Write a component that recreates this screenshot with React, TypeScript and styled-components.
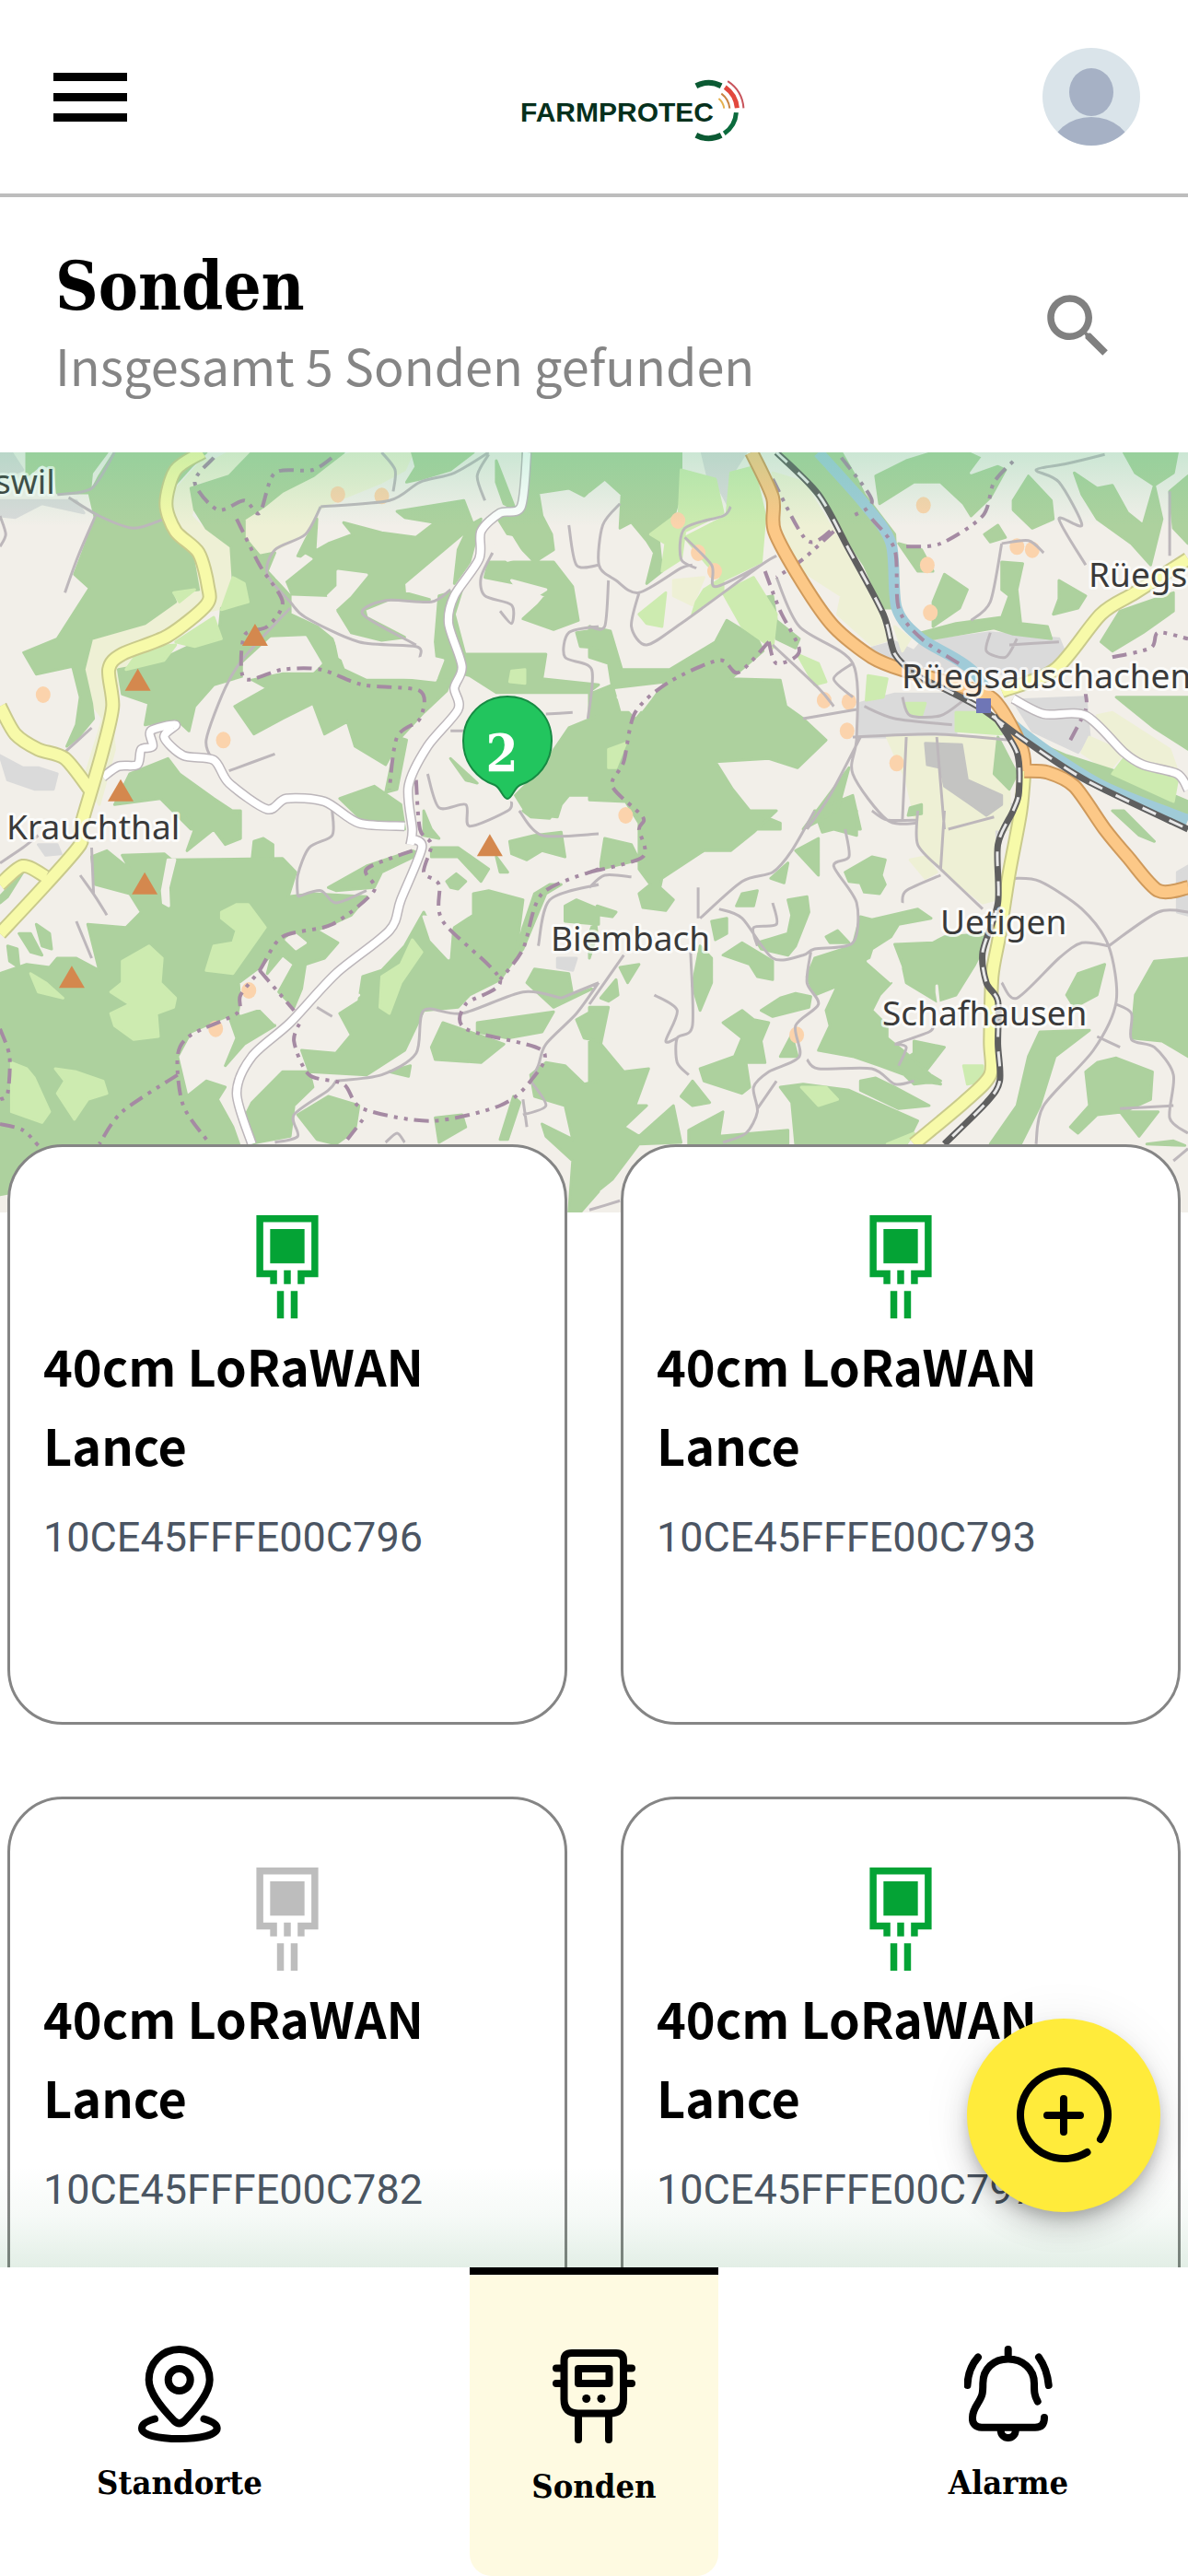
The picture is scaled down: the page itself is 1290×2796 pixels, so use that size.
import React from "react";
import styled, { createGlobalStyle } from "styled-components";

const slab = `"Roboto Slab", "DejaVu Serif Condensed", "DejaVu Serif", serif`;
const sans = `"Noto Sans CJK SC", "Noto Sans", sans-serif`;

const GlobalStyle = createGlobalStyle`
  *, *::before, *::after { box-sizing: border-box; }
  body { margin: 0; background: #fff; color: #000; font-family: ${sans}; }
  h1, h2, p, ul { margin: 0; padding: 0; }
  ul { list-style: none; }
  button { border: 0; padding: 0; background: none; font: inherit; color: inherit; cursor: pointer; }
`;

const Shell = styled.div`
  height: 100vh;
  display: flex;
  flex-direction: column;
  overflow: hidden;
`;

const Header = styled.header`
  flex: none;
  display: grid;
  grid-template-columns: 1fr auto 1fr;
  align-items: center;
  height: 214px;
  padding: 0 52px 0 58px;
  border-bottom: 4px solid #bdbdbd;
`;

const MenuButton = styled.button`
  justify-self: start;
  width: 80px;
  display: grid;
  gap: 13px;
`;

const MenuBar = styled.span`
  height: 9px;
  background: #000;
`;

const AvatarButton = styled.button`
  justify-self: end;
  width: 106px;
  height: 106px;
  border-radius: 50%;
  overflow: hidden;
`;

const Content = styled.div`
  position: relative;
  flex: 1;
  min-height: 0;
  display: flex;
  flex-direction: column;
`;

const Scroller = styled.main`
  flex: 1;
  min-height: 0;
  overflow-y: auto;
  scrollbar-width: none;
`;

const TitleRow = styled.div`
  display: flex;
  align-items: center;
  justify-content: space-between;
  padding: 55px 74px 52px 60px;
`;

const Title = styled.h1`
  font: 700 72px/84px ${slab};
`;

const Subtitle = styled.p`
  font-size: 54px;
  line-height: 86px;
  color: #858585;
`;

const IconButton = styled.button`
  width: 90px;
  height: 90px;
  color: #808080;
`;

const MapArea = styled.section`
  position: relative;
  height: 825px;
  overflow: hidden;
  background: #f2efe9;
  &::after {
    content: "";
    position: absolute;
    inset: 0 0 auto;
    height: 80px;
    background: linear-gradient(rgba(90, 205, 150, 0.26), rgba(90, 205, 150, 0));
    pointer-events: none;
  }
`;

const Marker = styled.button`
  position: absolute;
  left: calc(50% - 145px);
  top: 263px;
  width: 102px;
  height: 116px;
`;

const Fill = styled.svg`
  display: block;
  width: 100%;
  height: 100%;
`;

const CardGrid = styled.ul`
  position: relative;
  display: grid;
  grid-template-columns: 1fr 1fr;
  gap: 78px 58px;
  margin-top: -74px;
  padding: 0 8px 60px;
`;

const Card = styled.li`
  min-height: 630px;
  padding: 74px 36px 36px;
  border: 3px solid #858585;
  border-radius: 60px;
  background: #fff;
`;

const ProbeIcon = styled.svg<{ $online: boolean }>`
  display: block;
  width: 68px;
  height: 112px;
  margin: 0 auto 8px;
  color: ${(p) => (p.$online ? "#04a335" : "#bdbdbd")};
`;

const CardTitle = styled.h2`
  font-size: 54px;
  line-height: 86px;
  font-weight: 600;
`;

const CardId = styled.p`
  margin-top: 22px;
  font: 400 45px/72px Roboto, sans-serif;
  color: #4b5563;
`;

const BottomGlow = styled.div`
  position: absolute;
  inset: auto 0 0;
  height: 110px;
  background: linear-gradient(rgba(20, 120, 50, 0), rgba(20, 120, 50, 0.04) 50%, rgba(20, 120, 50, 0.12));
  pointer-events: none;
`;

const AddButton = styled.button`
  position: absolute;
  right: 30px;
  bottom: 60px;
  width: 210px;
  height: 210px;
  border-radius: 50%;
  background: #ffeb3b;
  display: grid;
  place-items: center;
  box-shadow: 0 9px 15px -3px rgba(0, 0, 0, 0.2), 0 18px 30px rgba(0, 0, 0, 0.14), 0 3px 54px rgba(0, 0, 0, 0.08);
`;

const TabBar = styled.nav`
  flex: none;
  display: flex;
  justify-content: space-between;
  height: 335px;
  padding: 0 60px;
  background: #fff;
`;

const Tab = styled.a<{ $active?: boolean }>`
  width: 270px;
  display: flex;
  flex-direction: column;
  align-items: center;
  justify-content: center;
  gap: 18px;
  border-top: ${(p) => (p.$active ? "8px solid #000" : "0")};
  border-radius: 0 0 24px 24px;
  background: ${(p) => (p.$active ? "#fefae1" : "transparent")};
  color: #000;
  text-decoration: none;
  font: 700 36px/48px ${slab};
`;

const LineIcon = styled.svg`
  display: block;
  fill: none;
  stroke: #000;
  stroke-width: 8px;
  stroke-linecap: round;
  stroke-linejoin: round;
`;

/* ---------- Map ---------- */

type Tile = { x: number; y: number };
type Layer = { tile: Tile; shapes: string[] };

const NW: Tile = { x: 0, y: -11 };
const NE: Tile = { x: 640, y: -11 };
const SW: Tile = { x: 0, y: 389 };
const SE: Tile = { x: 640, y: 389 };
const UNIT_X = 650 / 1568;
const UNIT_Y = 1 / 3;

const project = (tile: Tile, shape: string) =>
  shape.split(" ").map((pair) => {
    const [x, y] = pair.split(",").map(Number);
    return [tile.x + x * UNIT_X, tile.y + y * UNIT_Y];
  });

const areaPath = (layers: Layer[]) =>
  layers
    .flatMap(({ tile, shapes }) =>
      shapes.map((s) => "M" + project(tile, s).map(([x, y]) => `${x.toFixed(1)} ${y.toFixed(1)}`).join("L") + "Z")
    )
    .join("");

/* Lines run through their points as Catmull-Rom curves. */
const linePath = (layers: Layer[]) =>
  layers
    .flatMap(({ tile, shapes }) =>
      shapes.map((s) => {
        const p = project(tile, s);
        let d = `M${p[0][0].toFixed(1)} ${p[0][1].toFixed(1)}`;
        for (let i = 0; i < p.length - 1; i++) {
          const a = p[i - 1] || p[i];
          const b = p[i];
          const c = p[i + 1];
          const e = p[i + 2] || c;
          d += `C${(b[0] + (c[0] - a[0]) / 7).toFixed(1)} ${(b[1] + (c[1] - a[1]) / 7).toFixed(1)} ${(c[0] - (e[0] - b[0]) / 7).toFixed(1)} ${(c[1] - (e[1] - b[1]) / 7).toFixed(1)} ${c[0].toFixed(1)} ${c[1].toFixed(1)}`;
        }
        return d;
      })
    )
    .join("");

const forest: Layer[] = [
  {
    tile: NW,
    shapes: [
      "70,33 280,33 240,100 235,165 150,165 145,90 110,70 70,110",
      "300,33 540,33 500,80 450,150 440,240 500,340 520,480 450,490 460,520 380,590 240,640 220,740 240,850 245,900 205,960 175,990 200,920 210,830 190,730 95,755 62,685 150,640 235,475 195,430 250,250 235,170 260,110",
      "660,33 900,33 820,110 740,160 690,210 640,250 640,310 680,370 720,360 700,420 730,460 760,500 760,560 830,600 870,640 900,740 960,775 1180,775 1170,810 1110,880 1050,960 1010,1050 930,990 910,910 850,950 820,850 740,900 665,950 615,860 700,800 640,760 560,790 510,860 495,940 460,900 380,920 390,850 320,820 310,740 400,720 520,650 575,600 580,540 650,500 610,440 605,340 540,280 510,220 500,150 600,110",
      "765,495 880,500 885,550 920,620 1000,645 1060,635 960,570 955,545 1020,512 1125,512 1060,490 1058,460 1240,270 1215,190 1040,225 1060,245 1140,262 1090,310 1000,295 900,262 925,300 860,330 825,355 830,250 800,320 780,370 820,380 750,450",
      "1080,33 1240,33 1180,90 1100,120 1065,130 1090,80",
      "1370,33 1568,33 1568,130 1530,175 1490,150 1410,165 1420,240 1445,300 1450,350 1400,390 1330,300 1300,240 1370,220",
      "1280,390 1450,390 1500,470 1515,580 1450,610 1370,575 1410,530 1430,500 1350,460 1270,440",
      "1200,690 1430,690 1420,770 1568,790 1540,815 1300,815 1230,760 1200,750",
      "1150,500 1210,480 1190,560 1220,700 1200,800 1150,770 1140,650",
      "1490,930 1568,890 1568,1150 1490,1150 1470,1180 1460,1220 1380,1210 1350,1150 1390,1100 1430,1040",
      "1510,620 1568,610 1568,670 1520,665",
      "340,1080 440,1030 470,1080 560,1160 620,1210 630,1260 500,1260 420,1160 300,1180",
      "1065,970 1040,1130 1010,1140 1040,960",
      "890,1160 980,1120 1050,1180 1060,1260 940,1220",
      "1180,1030 1250,1110 1220,1100",
      "1300,60 1350,220 1320,200 1300,130",
      "1230,270 1260,250 1230,390 1190,460 1200,350",
    ],
  },
  {
    tile: NE,
    shapes: [
      "0,33 240,33 240,160 210,290 180,300 190,420 150,460 170,360 150,320 110,260 80,280 85,170 40,120 0,160",
      "0,600 55,615 85,740 210,740 330,650 360,580 440,640 455,680 370,770 500,775 515,860 560,900 620,970 545,1060 470,1030 330,1040 375,1130 420,1200 500,1240 500,1260 140,1260 95,1170 0,1165 0,820 60,790 80,880 140,880 165,840 200,780 60,800 50,720 0,700",
      "500,33 660,33 700,120 720,170 800,300 810,540 770,540 720,400 600,180",
      "750,110 830,60 900,33 990,33 1090,90 1050,180 1000,240 980,200 920,130 850,130 760,200",
      "1110,190 1150,110 1210,190 1215,250 1160,280 1110,220",
      "1270,100 1330,150 1370,140 1410,230 1450,270 1480,140 1500,250 1470,400 1420,330 1330,250 1290,170",
      "1400,33 1540,33 1530,100 1480,140 1430,100",
      "1520,160 1568,110 1568,330 1530,280",
      "1340,650 1390,550 1530,490 1530,550 1450,620 1370,680",
      "1080,390 1135,395 1120,480 1130,590 1200,600 1210,640 1110,625 1060,605 900,640 870,620 960,590 1080,570 1100,500 1080,480",
      "930,430 990,480 970,540 900,600 900,520",
      "1230,450 1300,500 1280,540 1215,560 1230,510",
      "810,330 860,420 900,420 870,350",
      "1035,300 1070,270 1090,310 1050,325",
      "1140,960 1250,1020 1400,1080 1568,1170 1568,1210 1350,1110",
      "1380,830 1568,830 1568,1000 1480,930",
      "1070,960 1120,1080 1100,1130 1060,1080",
      "590,1210 680,1060 650,1200 560,1260",
      "610,1190 690,1150 710,1260 610,1260",
      "440,510 480,500 490,580 550,640 540,670 490,640",
      "840,1190 870,1180 870,1210 835,1215",
    ],
  },
  {
    tile: SW,
    shapes: [
      "0,530 70,500 130,510 150,480 200,480 260,520 230,370 330,380 370,330 340,270 250,240 240,150 280,130 340,190 320,145 430,140 450,160 740,155 775,200 755,280 820,270 960,280 920,340 850,380 740,420 690,500 625,560 630,650 500,720 465,800 490,930 540,880 590,900 570,940 610,1030 630,1100 0,1250",
      "690,90 715,110 715,160 660,160 665,100",
      "485,0 630,0 630,90 590,110 560,60 490,130 510,60",
      "860,250 960,180 1080,130 1100,140 1000,200 980,250 880,260",
      "660,950 740,850 810,850 820,900 770,960 760,1060 650,1085 640,1000",
      "1110,330 1060,440 1000,520 950,540 940,620 890,660 920,730 880,790 790,780 810,850 960,860 1060,780 1110,650 1200,640 1230,600 1310,550 1350,480 1370,290 1280,260 1240,270 1240,340 1190,380 1170,480",
      "750,400 830,390 885,430 850,480 800,500 790,580 770,640 730,590 770,500 740,470 700,530 710,480",
      "600,670 700,640 720,700 640,760 590,830 620,740",
      "1130,770 1160,690 1230,720 1320,760 1260,820 1140,810",
      "1250,690 1450,655 1420,720 1330,740 1250,720",
      "780,990 860,930 940,960 930,1040 880,1085 830,1070",
      "1390,860 1430,820 1480,830 1530,890 1568,880 1568,1240 1520,1308 1490,1308 1500,1140 1430,1060 1420,1020 1500,1070 1480,960 1400,930",
      "1380,560 1400,515 1490,530 1500,600 1550,580 1450,640",
      "1480,310 1510,290 1568,320 1568,370 1480,360",
      "1130,120 1200,120 1280,190 1260,230 1200,150 1130,150",
      "1170,230 1195,205 1220,230 1200,255 1180,250",
      "1335,100 1400,80 1470,70 1480,150 1420,130 1380,160 1340,140",
      "1300,150 1330,200 1310,200",
      "1400,270 1440,240 1470,240 1430,270 1370,450 1350,480 1370,380",
      "1510,680 1568,640 1568,750 1530,740",
      "1310,1070 1345,930 1362,950 1330,1070",
      "1140,1000 1210,990 1220,1030 1150,1080",
      "20,440 45,450 50,510 25,490",
      "50,400 80,400 110,470 80,460",
      "95,370 130,400 135,450 110,440",
      "0,280 60,200 20,280 0,300",
      "1370,0 1450,0 1440,25 1390,20",
      "1020,850 1075,830 1070,865",
      "1110,0 1130,60 1150,90 1110,80",
    ],
  },
  {
    tile: SE,
    shapes: [
      "130,0 490,0 430,70 370,130 300,130 190,220 185,250 220,290 200,325 140,315 130,270 160,240 130,190",
      "30,170 40,90 110,110 130,160 30,190",
      "600,90 600,210 540,130",
      "590,0 700,0 700,80 640,60 610,70",
      "475,220 520,170 510,235",
      "670,200 740,150 775,160 765,210 775,240 760,270 720,265 710,235 680,230",
      "385,310 400,270 440,260 430,310",
      "520,290 570,280 575,330 540,440 520,470 450,450 440,430 520,400 530,340",
      "320,360 360,350 360,400 330,420",
      "710,345 740,355 860,320 895,350 810,370 790,410 740,450 730,490 790,560 760,600 740,650 780,700 780,740 840,800 920,890 870,880 760,830 690,800 600,780 630,700 620,650 650,570 590,600 570,540 590,480 690,440",
      "800,435 900,430 930,410 1050,400 1010,500 960,600 910,620 830,560 820,500",
      "350,470 400,430 480,490 480,550 440,540 420,500",
      "450,650 500,610 540,595 580,605 575,640 480,670",
      "350,690 400,650 430,680 470,690 450,750 460,820 410,820 420,900 400,920 300,880 290,840 380,800 400,740",
      "500,800 530,730 545,800",
      "620,410 650,390 680,430 630,430",
      "270,570 290,440 320,480 320,560 290,650",
      "80,510 130,500 100,560",
      "0,640 50,640 30,760 90,850 155,840 120,960 150,960 90,1030 130,1060 220,960 240,1080 130,1085 60,1200 0,1260",
      "240,930 270,880 315,950 270,960",
      "260,1085 260,1040 350,980 340,1060 520,1040 520,1085",
      "500,900 560,890 680,910 860,1010 830,1085 540,1085 530,950",
      "710,880 750,870 800,900 890,960 810,970 710,910",
      "800,830 850,790 850,750 930,770 880,850 920,880 850,890",
      "1250,600 1280,530 1350,500 1330,600 1270,640",
      "1180,720 1310,715 1220,800 1180,960 1130,1085 1050,1085 1120,960 1150,800",
      "1300,850 1330,820 1380,805 1475,850 1470,940 1400,980 1330,990 1280,1050 1260,1030 1310,960",
      "1480,490 1568,480 1568,800 1500,750 1420,740 1430,600",
      "1390,980 1490,980 1440,1060",
      "1460,1085 1530,1075 1560,1090",
      "20,310 70,330 60,345 30,340",
      "1370,0 1400,0 1480,100 1440,80",
      "30,610 70,550 75,600 50,620",
      "0,400 15,350 20,400 0,480",
    ],
  },
];

const clearing: Layer[] = [
  {
    tile: NW,
    shapes: [
      "710,640 800,635 840,720 820,745 740,745 640,770 640,720",
      "885,420 960,432 915,500 880,540 860,500 885,470",
      "880,640 1090,690 1160,710 1140,775 960,750 890,700",
      "1295,300 1340,310 1370,370 1330,385 1300,350",
      "740,430 800,370 815,380 740,455 725,440",
      "1340,450 1430,480 1380,520",
    ],
  },
  { tile: NE, shapes: ["75,830 160,830 120,890", "1000,100 1040,33 1090,60"] },
  {
    tile: SW,
    shapes: [
      "440,160 458,160 440,250 442,310 428,300 425,260",
      "1110,345 1150,350 1180,400 1175,480 1130,420",
      "640,580 680,530 740,620 720,690 680,640 630,660",
      "750,420 770,400 800,430 775,450",
      "900,600 940,600 920,620",
    ],
  },
  { tile: SE, shapes: ["730,490 790,455 815,510 790,555", "910,590 910,570 915,630", "900,370 940,380 900,400"] },
];

const farmland: Layer[] = [
  {
    tile: NW,
    shapes: [
      "560,60 600,33 680,33 620,110 520,130 500,240 540,290 605,340 600,470 580,540 510,560 400,640 330,720 290,860 300,1000 260,1180 220,1100 270,900 240,850 220,700 250,630 400,580 470,500 520,470 510,370 440,240 450,170 530,60",
      "860,60 930,33 1080,33 1060,90 1000,130 900,180 830,220 830,280 690,370 650,330 640,250 730,170 800,130",
    ],
  },
  {
    tile: NE,
    shapes: [
      "480,100 560,130 640,290 760,560 790,640 740,660 650,560 660,500 560,420 500,290",
      "780,960 1060,960 1100,1140 1100,1260 860,1260 830,1100",
      "1310,960 1400,1010 1360,1070 1290,1010",
      "1370,880 1520,1000 1540,1070 1400,1010 1330,890",
      "800,600 840,640 820,680",
      "220,450 300,440 270,530 220,500",
    ],
  },
  {
    tile: SE,
    shapes: ["860,0 1060,60 1060,290 1030,300 920,190 860,110", "0,930 20,960 20,1020 45,1020 30,1090 0,1090", "840,160 880,150 910,200 880,220"],
  },
  { tile: SW, shapes: ["1530,960 1568,930 1568,1090 1530,1090"] },
];

const meadow: Layer[] = [
  {
    tile: NW,
    shapes: ["580,545 650,520 640,460 610,440", "560,570 580,640 510,665 460,650", "370,670 460,660 430,710 330,740", "455,490 510,480 470,520", "1340,745 1375,740 1375,785 1335,780"],
  },
  {
    tile: NE,
    shapes: [
      "240,90 330,120 350,230 250,290 240,380 190,420 200,330 160,300 235,230",
      "250,310 360,240 370,100 430,80 460,240 450,390 350,450 310,400",
      "350,490 430,440 490,560 480,670 400,600",
      "300,480 350,440 350,480 270,560 280,520",
      "130,560 200,490 190,600 150,590",
      "960,880 1050,880 1080,950 960,940",
      "730,760 780,770 770,830 725,840",
      "1400,1030 1540,1100 1530,1170 1370,1080",
      "545,690 600,720 620,780 590,790",
      "50,1000 95,980 70,1060 50,1060",
      "830,850 880,850 870,890 835,880",
    ],
  },
  {
    tile: SW,
    shapes: [
      "580,330 620,305 650,305 695,380 610,530 540,520 560,440 610,430 620,390 580,350",
      "320,490 390,440 425,480 420,560 460,610 455,640 410,660 415,735 350,745 300,700 290,660 340,630 290,590 320,560",
      "30,820 70,840 90,870 130,980 110,1015 30,980",
      "145,840 200,850 270,880 280,920 230,940 195,1005 150,920 170,880",
      "80,530 120,560 165,610 100,590",
      "1080,420 1105,460 1050,560 1020,660 995,640 1000,540 1050,500",
    ],
  },
  { tile: SE, shapes: ["555,900 620,900 650,940 600,960", "980,830 1030,830 1030,880 990,890", "780,1085 850,1050 830,1085"] },
];

const builtUp: Layer[] = [
  { tile: NW, shapes: ["0,190 200,190 220,230 110,200 40,245 0,240", "0,1020 60,1060 100,1060 150,1080 140,1130 90,1130 20,1100", "0,33 30,33 60,90 0,120"] },
  {
    tile: NE,
    shapes: [
      "295,33 410,33 370,110 370,220 340,150 310,110",
      "870,650 1050,620 1230,640 1250,700 1200,760 820,740 740,670 800,650 850,680",
      "710,850 800,820 960,820 1030,880 960,880 960,960 700,960",
      "1110,840 1300,830 1310,960 1280,1010 1160,940",
      "1090,1180 1110,1180 1100,1260 1060,1260",
    ],
  },
  { tile: SW, shapes: ["100,110 150,110 160,140 120,145", "1460,480 1510,480 1500,520 1460,510"] },
  { tile: SE, shapes: ["1030,0 1110,0 1070,90 1040,60", "1540,200 1568,180 1568,340 1540,330"] },
];

const industry: Layer[] = [{ tile: NE, shapes: ["880,980 975,985 990,1100 1080,1150 1080,1180 1040,1215 1000,1180 930,1120 920,1060 885,1050"] }];

const lanes: Layer[] = [
  {
    tile: NW,
    shapes: [
      "300,33 240,150 150,170",
      "180,180 260,240 350,280 430,250",
      "250,240 205,370 170,490",
      "840,210 800,300 720,350 700,430 760,520 800,570 940,650 1090,665 1100,700",
      "840,210 1020,190 1100,130 1190,100 1280,33",
      "760,540 640,700 590,800 540,970 560,1040",
      "600,1070 720,1015",
      "1180,480 1130,520 1010,515 950,560 1090,660",
      "1290,360 1260,440 1270,500 1340,530 1340,590 1310,550",
      "1490,270 1510,400 1568,400",
      "1568,600 1490,620 1480,700 1550,740 1540,900",
      "1120,1080 1150,1190 1220,1180 1230,1250 1330,1200 1340,1170",
      "1280,40 1250,110 1270,190",
      "1000,33 1035,90 1030,160",
      "0,340 15,300 0,240",
      "240,930 160,1020",
      "1180,940 1220,940",
      "1430,885 1500,880",
    ],
  },
  {
    tile: NE,
    shapes: [
      "80,200 35,270 25,400 70,450 130,490 240,410 270,400",
      "50,450 40,600 0,600",
      "370,210 350,240 250,280 240,380 280,410",
      "250,310 320,400 330,470 450,400",
      "130,490 110,600 150,660 240,590 450,400 490,370",
      "490,440 550,600 690,720 700,960 690,1080 780,1230 860,1240",
      "710,960 630,1150 570,1260",
      "830,960 820,1230",
      "910,960 930,1260",
      "1080,330 1050,520 1000,580",
      "1080,330 1150,320 1190,360",
      "1350,40 1250,70 1170,90 1230,130 1290,270 1230,250 1300,400",
      "690,960 900,950 1100,970",
      "1520,160 1520,370",
      "560,900 700,870",
      "480,660 600,800 640,860",
      "690,720 640,770 690,830",
      "820,830 840,890 920,890 980,840",
      "720,860 800,900 950,920",
      "1050,620 1040,680 1090,700 1120,640",
      "1100,660 1230,650",
    ],
  },
  {
    tile: SW,
    shapes: [
      "870,0 870,80 810,120 780,210 780,280",
      "780,280 840,260 880,300 960,260",
      "880,880 1000,860 1090,790 1110,650 1210,660 1370,590 1470,610",
      "1568,560 1510,660 1430,760 1410,830 1390,880",
      "1360,0 1420,80 1568,75",
      "1568,240 1440,290 1410,440",
      "0,170 60,120 100,80",
      "210,210 250,280 280,340",
      "240,120 245,270",
      "720,1080 780,1060 770,990 860,910 880,880",
      "200,360 240,480",
      "830,640 870,670",
      "1370,940 1380,1030",
      "1390,880 1430,960 1370,990",
      "1010,1080 1040,1050 1060,1080",
      "1470,610 1568,560",
    ],
  },
  {
    tile: SE,
    shapes: [
      "590,0 530,130 480,200 400,230 290,350",
      "670,60 680,150 640,180 700,300 690,430 590,450 560,470 480,480 400,350 340,320",
      "580,460 570,560 600,630 540,700 550,800 470,850 430,900 440,980 410,1050 350,1080",
      "490,880 440,970",
      "570,810 600,840 740,840 800,890 850,880",
      "920,190 1030,320",
      "860,0 860,110 920,190",
      "920,210 830,260 820,300",
      "930,0 920,190",
      "940,60 1060,20",
      "740,0 780,30 860,30",
      "1110,220 1180,230 1290,320 1360,440 1380,620 1320,780 1190,960 1170,1085",
      "1360,440 1290,430 1230,480 1120,610 1080,560",
      "1568,330 1490,330 1360,440",
      "265,460 270,700 230,740 230,820 260,860",
      "170,600 230,650 200,750 230,740",
      "1380,630 1420,660 1420,745 1480,770 1530,860 1520,1000 1568,1050",
      "1330,735 1390,770",
      "90,470 0,630",
      "480,300 490,370 430,380 440,440",
      "0,250 40,210 110,215",
      "285,250 285,350",
      "1390,970 1530,960",
      "800,760 890,720 900,700",
      "800,760 830,770 810,830",
      "0,1300 80,1270",
      "1530,1140 1568,1100",
    ],
  },
];

const river: Layer[] = [{ tile: NE, shapes: ["600,33 720,200 790,330 805,540 870,640 1000,740 1110,920 1330,1110 1568,1230"] }];

const whiteRoads: Layer[] = [
  {
    tile: NW,
    shapes: [
      "1380,33 1365,210 1310,230 1260,290 1255,380 1190,500 1175,590 1210,730 1190,800 1200,870 1120,990 1070,1120 1080,1260 1075,1310",
      "270,1090 310,1055 360,1050 370,1000 400,990 395,940 460,920 430,960 480,1020 560,1035 600,1110 700,1195 750,1160 850,1170 940,1240 1060,1250",
    ],
  },
  { tile: NE, shapes: ["1110,835 1190,885 1300,890 1400,1010 1450,1050 1540,1080 1568,1130"] },
  { tile: SW, shapes: ["1075,90 1105,120 1050,290 1020,390 880,530 760,690 660,800 620,920 660,1085"] },
];

const yellowRoads: Layer[] = [
  {
    tile: NW,
    shapes: [
      "530,33 460,90 435,200 460,290 520,360 545,470 540,530 440,630 320,690 285,740 295,860 270,1000 240,1130 210,1260 210,1310 120,1440 0,1600",
      "0,860 40,950 100,1000 170,1030 240,1140",
    ],
  },
  { tile: SW, shapes: ["0,240 60,180 120,215"] },
  {
    tile: NE,
    shapes: ["1568,380 1430,490 1340,560 1220,740 1080,810", "1140,1060 1130,1200 1100,1400 1075,1600 1055,1740 1050,1950 1050,2060 980,2150 850,2285"],
  },
];

const orangeRoads: Layer[] = [
  {
    tile: NE,
    shapes: [
      "425,33 480,180 485,290 560,460 640,600 740,700 830,745 960,790 1060,840 1130,990 1140,1070",
      "1140,1070 1200,1075 1270,1120 1350,1260 1410,1350 1490,1460 1568,1450",
    ],
  },
];

const railways: Layer[] = [
  {
    tile: NE,
    shapes: [
      "490,33 600,170 680,350 770,560 800,690 860,760 940,810 1030,870 1140,970 1300,1100 1568,1260",
      "1060,890 1120,1010 1125,1140 1110,1200 1070,1310 1070,1500 1030,1660 1040,1760 1070,1820 1070,1960 1075,2080 1040,2150 930,2285",
    ],
  },
];

const borders: Layer[] = [
  {
    tile: NW,
    shapes: [
      "560,50 510,130 570,220 640,190 680,230 720,100 820,90 880,40",
      "620,250 680,400 740,520 700,600 640,630 640,770 740,740 840,740 950,790 1100,810 1100,900 1040,960 1020,1130",
    ],
  },
  {
    tile: SW,
    shapes: [
      "1090,-100 1100,60 1130,110 1110,200 1150,240 1160,360 1310,550 1220,630 1220,710 1420,780 1390,880 1310,960 1130,1010 950,970 900,890 810,860 770,750 790,680",
      "1568,190 1420,270 1370,450 1310,550",
      "1080,130 960,190 980,260 870,370 740,410 680,520 630,600 620,660 500,730 465,800 480,960 550,1085",
      "465,860 320,980 260,1085",
      "0,710 25,800 20,920 0,940",
      "0,1020 60,1040 100,1090",
      "680,520 770,650",
      "910,1070 960,990",
    ],
  },
  {
    tile: NE,
    shapes: [
      "470,650 390,750 340,710 210,780 120,880 90,1040 60,1120 140,1220 130,1260 140,1350 0,1400",
      "480,120 570,320 640,280",
      "640,290 560,380 490,440",
      "460,420 500,550 550,680 490,720 470,650",
      "660,50 740,190 690,240",
      "740,250 800,350 810,540 870,640 980,730",
      "830,340 920,330 1030,240 1060,130 1120,50",
      "1260,970 1300,870 1300,820",
      "1370,700 1470,670 1490,620 1568,640",
    ],
  },
];

const spots: [Tile, number, number][] = [
  [NW, 113, 822], [NW, 585, 970], [NW, 885, 170], [NW, 1000, 175],
  [NE, 232, 255], [NE, 285, 360], [NE, 328, 420], [NE, 875, 205], [NE, 1120, 340], [NE, 1160, 350],
  [NE, 675, 940], [NE, 805, 1045], [NE, 615, 840], [NE, 680, 845], [NE, 885, 400], [NE, 893, 555],
  [SW, 652, 585], [SW, 565, 710], [SE, 543, 730], [SE, 95, 15],
];

const peaks: [Tile, number, number][] = [
  [NW, 668, 627], [NW, 361, 773], [NW, 316, 1133], [SW, 379, 236], [SW, 188, 541], [SW, 1283, 112],
];

const places: [string, number, number][] = [
  ["swil", -6, 45],
  ["Rüegs", 1182, 146],
  ["Rüegsauschachen", 979, 256],
  ["Krauchthal", 7, 420],
  ["Biembach", 598, 541],
  ["Uetigen", 1021, 523],
  ["Schafhausen", 958, 622],
];

const PlaceName = styled.text`
  font: 400 37px "Noto Sans", sans-serif;
  fill: #3a3a3a;
  stroke: rgba(255, 255, 255, 0.75);
  stroke-width: 6px;
  stroke-linejoin: round;
  paint-order: stroke;
`;

const Area = ({ of, color }: { of: Layer[]; color: string }) => (
  <path d={areaPath(of)} fill={color} stroke={color} strokeWidth={3} strokeLinejoin="round" />
);

const Line = ({ of, color, width, dash }: { of: Layer[]; color: string; width: number; dash?: string }) => (
  <path d={linePath(of)} fill="none" stroke={color} strokeWidth={width} strokeDasharray={dash} strokeLinejoin="round" />
);

function TerrainMap() {
  return (
    <Fill viewBox="0 0 1290 825" preserveAspectRatio="xMidYMid slice" role="img" aria-label="Karte">
      <rect width="1290" height="825" fill="#f2efe9" />
      <Area of={builtUp} color="#dadada" />
      <Area of={farmland} color="#eef0d5" />
      <Area of={forest} color="#add19e" />
      <Area of={clearing} color="#f2efe9" />
      <Area of={meadow} color="#cdebb0" />
      <Area of={industry} color="#c4c4c2" />
      {spots.map(([t, x, y]) => (
        <ellipse key={`${t.x}-${t.y}-${x}`} cx={t.x + x * UNIT_X} cy={t.y + y * UNIT_Y} rx={8} ry={9} fill="#fbd3ac" />
      ))}
      <Line of={lanes} color="#bdb7bb" width={3} />
      <Line of={river} color="#a0cbd8" width={12} />
      <Line of={borders} color="#a58aa3" width={4} dash="16 7 4 7 4 7" />
      <Line of={whiteRoads} color="#bcb6ba" width={11} />
      <Line of={whiteRoads} color="#ffffff" width={8} />
      <Line of={yellowRoads} color="#c9ca8c" width={16} />
      <Line of={yellowRoads} color="#f7faa9" width={12} />
      <Line of={orangeRoads} color="#cf9a5c" width={16} />
      <Line of={orangeRoads} color="#fcc887" width={12} />
      <Line of={railways} color="#5f5f5f" width={7} />
      <Line of={railways} color="#e8e8e8" width={3} dash="16 16" />
      {peaks.map(([t, x, y]) => {
        const cx = t.x + x * UNIT_X;
        const cy = t.y + y * UNIT_Y;
        return <path key={`${x}-${y}`} d={`M${cx} ${cy - 12}l14 24h-28z`} fill="#d4884e" />;
      })}
      <rect x="1060" y="267" width="16" height="16" fill="#6f76b6" />
      {places.map(([name, x, y]) => (
        <PlaceName key={name} x={x} y={y}>
          {name}
        </PlaceName>
      ))}
    </Fill>
  );
}

const MarkerCount = styled.text`
  font: 700 56px ${slab};
  fill: #fff;
`;

/* ---------- Logo ---------- */

const LogoText = styled.text`
  font: 700 30px "Liberation Sans", Arial, sans-serif;
  fill: #06301c;
`;

const polar = (r: number, deg: number) => {
  const a = (deg * Math.PI) / 180;
  return `${(291.5 + r * Math.cos(a)).toFixed(2)} ${(65 + r * Math.sin(a)).toFixed(2)}`;
};
const arc = (r: number, from: number, to: number) => `M${polar(r, from)}A${r} ${r} 0 0 1 ${polar(r, to)}`;

function Logo() {
  return (
    <svg width="340" height="100" viewBox="0 0 340 100" role="img" aria-label="FARMPROTEC">
      <g fill="none">
        <path d={arc(30, -117, -63)} stroke="#0b5a33" strokeWidth="6" />
        <path d={arc(30, 63, 117)} stroke="#0b5a33" strokeWidth="6" />
        <path d={arc(30, 4, 56)} stroke="#0b6b3d" strokeWidth="5" />
        <path d={arc(38, -57, -4)} stroke="#c8545c" strokeWidth="2" />
        <path d={arc(31, -55, -5)} stroke="#e2483d" strokeWidth="5" />
        <path d={arc(23, -53, -6)} stroke="#c98443" strokeWidth="2" />
        <path d={arc(17, -50, -8)} stroke="#e5b04e" strokeWidth="2" />
      </g>
      <LogoText x="87" y="77">
        FARMPROTEC
      </LogoText>
    </svg>
  );
}

/* ---------- Screen ---------- */

const probes = [
  { id: "10CE45FFFE00C796", online: true },
  { id: "10CE45FFFE00C793", online: true },
  { id: "10CE45FFFE00C782", online: false },
  { id: "10CE45FFFE00C797", online: true },
];

function ProbeCard({ id, online }: { id: string; online: boolean }) {
  return (
    <Card>
      <ProbeIcon $online={online} viewBox="0 0 9 15" aria-hidden="true">
        <path
          fill="currentColor"
          fillRule="evenodd"
          d="M0 0H9V9H7V10H6V8H8V1H1V8H3V10H2V9H0ZM2 2H7V7H2ZM4 8H5V10H4ZM3 11H4V15H3ZM5 11H6V15H5Z"
        />
      </ProbeIcon>
      <CardTitle>40cm LoRaWAN Lance</CardTitle>
      <CardId>{id}</CardId>
    </Card>
  );
}

export default function App() {
  return (
    <Shell>
      <GlobalStyle />
      <Header>
        <MenuButton aria-label="Menü">
          <MenuBar />
          <MenuBar />
          <MenuBar />
        </MenuButton>
        <Logo />
        <AvatarButton aria-label="Profil">
          <Fill viewBox="0 0 106 106">
            <rect width="106" height="106" fill="#dae4ea" />
            <ellipse cx="53" cy="48" rx="24" ry="26" fill="#a6b1c5" />
            <ellipse cx="53" cy="112" rx="44" ry="37" fill="#a6b1c5" />
          </Fill>
        </AvatarButton>
      </Header>

      <Content>
        <Scroller>
          <TitleRow>
            <div>
              <Title>Sonden</Title>
              <Subtitle>Insgesamt 5 Sonden gefunden</Subtitle>
            </div>
            <IconButton aria-label="Suchen">
              <Fill viewBox="0 0 24 24" fill="currentColor">
                <path d="M15.5 14h-.79l-.28-.27C15.41 12.59 16 11.11 16 9.5 16 5.91 13.09 3 9.5 3S3 5.91 3 9.5 5.91 16 9.5 16c1.61 0 3.09-.59 4.23-1.57l.27.28v.79l5 4.99L20.49 19l-4.99-5zm-6 0C7.01 14 5 11.99 5 9.5S7.01 5 9.5 5 14 7.01 14 9.5 11.99 14 9.5 14z" />
              </Fill>
            </IconButton>
          </TitleRow>

          <MapArea>
            <TerrainMap />
            <Marker aria-label="2 Sonden">
              <Fill viewBox="0 0 102 116">
                <path
                  d="M51 2C24 2 3 23 3 50C3 75 19 92 37 98C44 101 46 113 51 113C56 113 58 101 65 98C83 92 99 75 99 50C99 23 78 2 51 2Z"
                  fill="#22c55e"
                  stroke="#178a43"
                  strokeWidth="2"
                />
                <MarkerCount x="45" y="83" textAnchor="middle">
                  2
                </MarkerCount>
              </Fill>
            </Marker>
          </MapArea>

          <CardGrid>
            {probes.map((p) => (
              <ProbeCard key={p.id} {...p} />
            ))}
          </CardGrid>
        </Scroller>
        <BottomGlow />
        <AddButton aria-label="Sonde hinzufügen">
          <LineIcon width="112" height="112" viewBox="-56 -56 112 112">
            <path d="M40 26A47.5 47.5 0 1 0 25.5 40M-18 0H18M0 -18V18" />
          </LineIcon>
        </AddButton>
      </Content>

      <TabBar>
        <Tab href="#standorte">
          <LineIcon width="96" height="112" viewBox="0 0 96 112">
            <path d="M47.7 10C29 10 14.7 25 14.7 43C14.7 58 30 75 42 87.500Q47.700 93 53.400 87.500C65.400 75 80.700 58 80.700 43C80.700 25 66 10 47.700 10Z" />
            <circle cx="47.7" cy="43" r="12" />
            <path d="M21 85.500C12 88 7 91 7 95.500C7 103 25 107 47.700 107C70 107 88.700 103 88.700 95.500C88.700 91 83 88 74.500 85.500" />
          </LineIcon>
          Standorte
        </Tab>
        <Tab href="#sonden" $active aria-current="page">
          <LineIcon width="96" height="112" viewBox="0 0 96 112">
            <path d="M24 10H72Q80 10 80 18V60Q80 75.500 65 75.500H31Q15.500 75.500 15.500 60V18Q15.500 10 24 10Z" />
            <rect x="31" y="27" width="33.500" height="16" />
            <path d="M7 26.500H13M7 43H13M83 26.500H89M83 43H89M31 77V104M64 77V104" />
            <g fill="#000" stroke="none">
              <circle cx="39.700" cy="59.500" r="4.500" />
              <circle cx="56" cy="59.500" r="4.500" />
            </g>
          </LineIcon>
          Sonden
        </Tab>
        <Tab href="#alarme">
          <LineIcon width="96" height="112" viewBox="0 0 96 112">
            <path d="M47.700 10V20M79.700 66.500C76 60 76 56 76 47C76 31 63 20.500 47.700 20.500C32 20.500 20.300 31 20.300 47C20.300 58 20 60 14.500 69C10 76 9 79 9 84C8.500 90 12 94.700 19 94.700H77C84 94.700 87 91 87 84" />
            <path d="M39.700 98A8 8 0 0 0 55.700 98M15 18.500Q4 31 3.500 49M81 18.500Q90 31 91.700 49" />
          </LineIcon>
          Alarme
        </Tab>
      </TabBar>
    </Shell>
  );
}
